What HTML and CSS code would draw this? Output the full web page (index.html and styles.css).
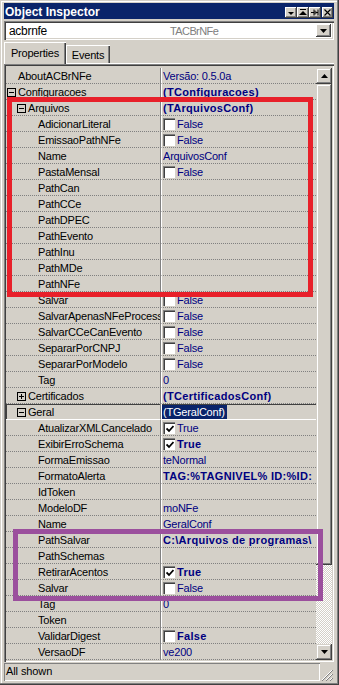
FILE: index.html
```html
<!DOCTYPE html>
<html>
<head>
<meta charset="utf-8">
<title>Object Inspector</title>
<link rel="stylesheet" href="styles.css">
</head>
<body>
<div class="window">
  <div class="titlebar">
    <span class="title">Object Inspector</span>
    <div class="tbtns">
      <span class="tbtn"><svg width="8" height="7" viewBox="0 0 8 7"><path d="M1 3h6l-3 3z" fill="#000"/></svg></span>
      <span class="tbtn"><svg width="8" height="7" viewBox="0 0 8 7"><path d="M1 0.5h6" stroke="#000"/><path d="M0 6h8l-4-4z" fill="#000"/></svg></span>
      <span class="tbtn"><svg width="9" height="7" viewBox="0 0 9 7"><path d="M0 3.5h3" stroke="#000"/><path d="M3 0.5v6M4 1.5v4M5 2.5v2" stroke="#000"/><path d="M5 3.5h2M7 0.5v6" stroke="#000"/></svg></span>
      <span class="tbtn close"><svg width="7" height="7" viewBox="0 0 7 7"><path d="M0.5 0.5l6 6M6.5 0.5l-6 6" stroke="#000" stroke-width="1.2"/></svg></span>
    </div>
  </div>

  <div class="combo">
    <span class="cname">acbrnfe</span>
    <span class="ctype">TACBrNFe</span>
    <span class="cdrop"><svg width="7" height="4" viewBox="0 0 7 4"><path d="M0 0h7l-3.5 4z" fill="#000"/></svg></span>
  </div>

  <div class="tabs">
    <div class="tab active">Properties</div>
    <div class="tab">Events</div>
  </div>

  <div class="grid">
    <div class="rows">
      <div class="row"><div class="name l1"><span class="exp"></span>AboutACBrNFe</div><div class="val">Versão: 0.5.0a</div></div>
      <div class="row"><div class="name l1"><span class="exp"><svg width="9" height="9" viewBox="0 0 9 9"><rect x="0.5" y="0.5" width="8" height="8" fill="none" stroke="#000"/><path d="M2 4.5h5" stroke="#000"/></svg></span>Configuracoes</div><div class="val b">(TConfiguracoes)</div></div>
      <div class="row"><div class="name l2"><span class="exp"><svg width="9" height="9" viewBox="0 0 9 9"><rect x="0.5" y="0.5" width="8" height="8" fill="none" stroke="#000"/><path d="M2 4.5h5" stroke="#000"/></svg></span>Arquivos</div><div class="val b">(TArquivosConf)</div></div>
      <div class="row"><div class="name l3"><span class="exp"></span>AdicionarLiteral</div><div class="val"><span class="cb"></span>False</div></div>
      <div class="row"><div class="name l3"><span class="exp"></span>EmissaoPathNFe</div><div class="val"><span class="cb"></span>False</div></div>
      <div class="row"><div class="name l3"><span class="exp"></span>Name</div><div class="val">ArquivosConf</div></div>
      <div class="row"><div class="name l3"><span class="exp"></span>PastaMensal</div><div class="val"><span class="cb"></span>False</div></div>
      <div class="row"><div class="name l3"><span class="exp"></span>PathCan</div><div class="val"></div></div>
      <div class="row"><div class="name l3"><span class="exp"></span>PathCCe</div><div class="val"></div></div>
      <div class="row"><div class="name l3"><span class="exp"></span>PathDPEC</div><div class="val"></div></div>
      <div class="row"><div class="name l3"><span class="exp"></span>PathEvento</div><div class="val"></div></div>
      <div class="row"><div class="name l3"><span class="exp"></span>PathInu</div><div class="val"></div></div>
      <div class="row"><div class="name l3"><span class="exp"></span>PathMDe</div><div class="val"></div></div>
      <div class="row"><div class="name l3"><span class="exp"></span>PathNFe</div><div class="val"></div></div>
      <div class="row"><div class="name l3"><span class="exp"></span>Salvar</div><div class="val"><span class="cb"></span>False</div></div>
      <div class="row"><div class="name l3"><span class="exp"></span><span class="clip">SalvarApenasNFeProcess</span></div><div class="val"><span class="cb"></span>False</div></div>
      <div class="row"><div class="name l3"><span class="exp"></span>SalvarCCeCanEvento</div><div class="val"><span class="cb"></span>False</div></div>
      <div class="row"><div class="name l3"><span class="exp"></span>SepararPorCNPJ</div><div class="val"><span class="cb"></span>False</div></div>
      <div class="row"><div class="name l3"><span class="exp"></span>SepararPorModelo</div><div class="val"><span class="cb"></span>False</div></div>
      <div class="row"><div class="name l3"><span class="exp"></span>Tag</div><div class="val">0</div></div>
      <div class="row"><div class="name l2"><span class="exp"><svg width="9" height="9" viewBox="0 0 9 9"><rect x="0.5" y="0.5" width="8" height="8" fill="none" stroke="#000"/><path d="M2 4.5h5M4.5 2v5" stroke="#000"/></svg></span>Certificados</div><div class="val b">(TCertificadosConf)</div></div>
      <div class="row sel"><div class="name l2"><span class="exp"><svg width="9" height="9" viewBox="0 0 9 9"><rect x="0.5" y="0.5" width="8" height="8" fill="none" stroke="#000"/><path d="M2 4.5h5" stroke="#000"/></svg></span>Geral</div><div class="val"><span class="hl">(TGeralConf)</span></div></div>
      <div class="row"><div class="name l3"><span class="exp"></span>AtualizarXMLCancelado</div><div class="val"><span class="cb on"><svg width="8" height="8" viewBox="0 0 8 8"><path d="M0.5 3.5l2.5 2.5 4.5-5" fill="none" stroke="#000" stroke-width="1.8"/></svg></span>True</div></div>
      <div class="row"><div class="name l3"><span class="exp"></span>ExibirErroSchema</div><div class="val b"><span class="cb on"><svg width="8" height="8" viewBox="0 0 8 8"><path d="M0.5 3.5l2.5 2.5 4.5-5" fill="none" stroke="#000" stroke-width="1.8"/></svg></span>True</div></div>
      <div class="row"><div class="name l3"><span class="exp"></span>FormaEmissao</div><div class="val">teNormal</div></div>
      <div class="row"><div class="name l3"><span class="exp"></span>FormatoAlerta</div><div class="val b"><span class="clip">TAG:%TAGNIVEL% ID:%ID:</span></div></div>
      <div class="row"><div class="name l3"><span class="exp"></span>IdToken</div><div class="val"></div></div>
      <div class="row"><div class="name l3"><span class="exp"></span>ModeloDF</div><div class="val">moNFe</div></div>
      <div class="row"><div class="name l3"><span class="exp"></span>Name</div><div class="val">GeralConf</div></div>
      <div class="row"><div class="name l3"><span class="exp"></span>PathSalvar</div><div class="val b"><span class="clip">C:\Arquivos de programas\</span></div></div>
      <div class="row"><div class="name l3"><span class="exp"></span>PathSchemas</div><div class="val"></div></div>
      <div class="row"><div class="name l3"><span class="exp"></span>RetirarAcentos</div><div class="val b"><span class="cb on"><svg width="8" height="8" viewBox="0 0 8 8"><path d="M0.5 3.5l2.5 2.5 4.5-5" fill="none" stroke="#000" stroke-width="1.8"/></svg></span>True</div></div>
      <div class="row"><div class="name l3"><span class="exp"></span>Salvar</div><div class="val"><span class="cb"></span>False</div></div>
      <div class="row"><div class="name l3"><span class="exp"></span>Tag</div><div class="val">0</div></div>
      <div class="row"><div class="name l3"><span class="exp"></span>Token</div><div class="val"></div></div>
      <div class="row"><div class="name l3"><span class="exp"></span>ValidarDigest</div><div class="val b"><span class="cb"></span>False</div></div>
      <div class="row"><div class="name l3"><span class="exp"></span>VersaoDF</div><div class="val">ve200</div></div>
    </div>
    <div class="vscroll">
      <div class="sbtn"><svg width="7" height="4" viewBox="0 0 7 4"><path d="M0 4h7l-3.5-4z" fill="#000"/></svg></div>
      <div class="thumb"></div>
      <div class="track"></div>
      <div class="sbtn"><svg width="7" height="4" viewBox="0 0 7 4"><path d="M0 0h7l-3.5 4z" fill="#000"/></svg></div>
    </div>
  </div>

  <div class="statusbar">
    <div class="panel">All shown</div>
    <div class="grip"><svg width="12" height="12" viewBox="0 0 12 12"><path d="M11 1L1 11M11 5L5 11M11 9L9 11" stroke="#fff"/><path d="M12 1L1 12M12 5L5 12M12 9L9 12" stroke="#808080"/></svg></div>
  </div>

  <div class="mark red"></div>
  <div class="mark purple"></div>
</div>
</body>
</html>
```

FILE: styles.css
```css
* { box-sizing: border-box; }
html, body { margin: 0; padding: 0; }
body {
  background: #d4d0c8;
  font-family: "Liberation Sans", Arial, sans-serif;
  font-size: 11px;
  color: #000;
}
.window {
  position: relative;
  width: 339px;
  height: 685px;
  background: #d4d0c8;
  padding: 3px 5px 3px 4px;
  display: flex;
  flex-direction: column;
  box-shadow: inset -1px -1px 0 #404040, inset -2px -2px 0 #808080, inset 1px 1px 0 #d4d0c8, inset 2px 2px 0 #fff;
}

/* title */
.titlebar {
  height: 16px;
  background: #0a246a;
  display: flex;
  align-items: center;
  margin-bottom: 2px;
}
.title {
  color: #fff;
  font-weight: bold;
  font-size: 12px;
  padding-left: 1px;
  padding-top: 1px;
}
.tbtns { margin-left: auto; display: flex; align-items: center; padding-right: 1px; padding-top: 2px; }
.tbtn {
  width: 12px;
  height: 11px;
  background: #d4d0c8;
  display: flex;
  align-items: center;
  justify-content: center;
  box-shadow: inset -1px -1px 0 #404040, inset 1px 1px 0 #fff, inset -2px -2px 0 #808080;
}
.tbtn.close { width: 11px; margin-left: 1px; }

/* combo */
.combo {
  height: 19px;
  background: #fff;
  display: flex;
  align-items: center;
  box-shadow: inset 1px 1px 0 #808080, inset 2px 2px 0 #404040, inset -1px -1px 0 #fff, inset -2px -2px 0 #d4d0c8;
  padding: 0 3px 0 5px;
}
.cname { width: 161px; font-size: 12px; letter-spacing: -0.3px; }
.ctype { color: #808080; font-size: 11px; letter-spacing: -0.6px; }
.cdrop {
  margin-left: auto;
  width: 15px;
  height: 13px;
  background: #d4d0c8;
  display: flex;
  align-items: center;
  justify-content: center;
  box-shadow: inset -1px -1px 0 #404040, inset 1px 1px 0 #fff, inset -2px -2px 0 #808080;
}

/* tabs */
.tabs {
  height: 24px;
  display: flex;
  align-items: flex-end;
  box-shadow: inset 0 -1px 0 #fff;
}
.tab {
  height: 18px;
  width: 44px;
  margin-bottom: 1px;
  text-align: center;
  padding-top: 3px;
  line-height: 14px;
  box-shadow: inset 1px 1px 0 #fff, inset -1px 0 0 #404040, inset -2px 0 0 #808080;
  letter-spacing: -0.2px;
}
.tab.active {
  height: 22px;
  width: 62px;
  margin-bottom: 0;
  padding-top: 4px;
  background: #d4d0c8;
}

/* grid */
.grid {
  height: 598px;
  display: flex;
  box-shadow: inset 1px 1px 0 #808080, inset 2px 2px 0 #404040, inset -1px -1px 0 #fff, inset -2px -2px 0 #d4d0c8;
  padding: 4px 2px 2px 2px;
}
.rows { flex: 1; display: flex; flex-direction: column; }
.row { display: flex; height: 16px; }
.name {
  width: 155px;
  border-right: 1px solid #808080;
  border-bottom: 1px dotted #808080;
  display: flex;
  align-items: center;
  white-space: nowrap;
  overflow: hidden;
  padding-top: 2px;
  line-height: 13px;
  letter-spacing: -0.2px;
}
.clip { overflow: hidden; white-space: nowrap; min-width: 0; }
.l1 { padding-left: 1px; }
.l2 { padding-left: 11px; }
.l3 { padding-left: 21px; }
.exp { width: 11px; flex: none; display: flex; align-items: center; margin-top: -1px; }
.exp svg { display: block; }
.val {
  flex: 1;
  border-left: 1px solid #fff;
  border-bottom: 1px dotted #808080;
  display: flex;
  align-items: center;
  padding-left: 1px;
  padding-top: 2px;
  white-space: nowrap;
  overflow: hidden;
  line-height: 13px;
  color: #000080;
  letter-spacing: -0.2px;
}
.val.b { font-weight: bold; letter-spacing: 0.3px; }
.cb {
  flex: none;
  width: 12px;
  height: 12px;
  margin-right: 2px;
  margin-top: -1px;
  background: #fff;
  box-shadow: inset 1px 1px 0 #808080, inset 2px 2px 0 #404040;
  display: flex;
  align-items: center;
  justify-content: center;
  padding: 1px 0 0 1px;
}
.cb svg { display: block; }
.sel .name {
  box-shadow: inset 1px 1px 0 #404040;
  border-bottom: 1px solid #fff;
}
.sel .val {
  box-shadow: inset 0 1px 0 #404040;
  border-bottom: 1px solid #fff;
  padding-left: 0;
  padding-top: 0;
}
.hl {
  background: #0a246a;
  color: #fff;
  height: 14px;
  line-height: 15px;
  margin-top: 1px;
  padding: 0 2px 0 1px;
}

/* scrollbar */
.vscroll { width: 16px; flex: none; display: flex; flex-direction: column; }
.sbtn, .thumb {
  background: #d4d0c8;
  box-shadow: inset -1px -1px 0 #404040, inset 1px 1px 0 #d4d0c8, inset -2px -2px 0 #808080, inset 2px 2px 0 #fff;
}
.sbtn { height: 16px; display: flex; align-items: center; justify-content: center; }
.thumb { height: 481px; }
.track {
  flex: 1;
  background: repeating-conic-gradient(#fff 0 25%, #d4d0c8 0 50%) 0 0 / 2px 2px;
}

/* status */
.statusbar { height: 20px; display: flex; align-items: stretch; padding-top: 1px; }
.panel {
  width: 316px;
  height: 18px;
  line-height: 17px;
  padding-left: 2px;
  box-shadow: inset 1px 1px 0 #808080, inset -1px -1px 0 #fff;
  letter-spacing: -0.1px;
}
.grip { flex: 1; display: flex; align-items: flex-end; justify-content: flex-end; padding: 0 1px 1px 0; }

/* annotation marks */
.mark { position: absolute; pointer-events: none; }
.mark.red { left: 7px; top: 97px; width: 306px; height: 200px; border: 5px solid #e8202a; }
.mark.purple { left: 13px; top: 529px; width: 310px; height: 72px; border: 5px solid #9b4f9d; }
```
